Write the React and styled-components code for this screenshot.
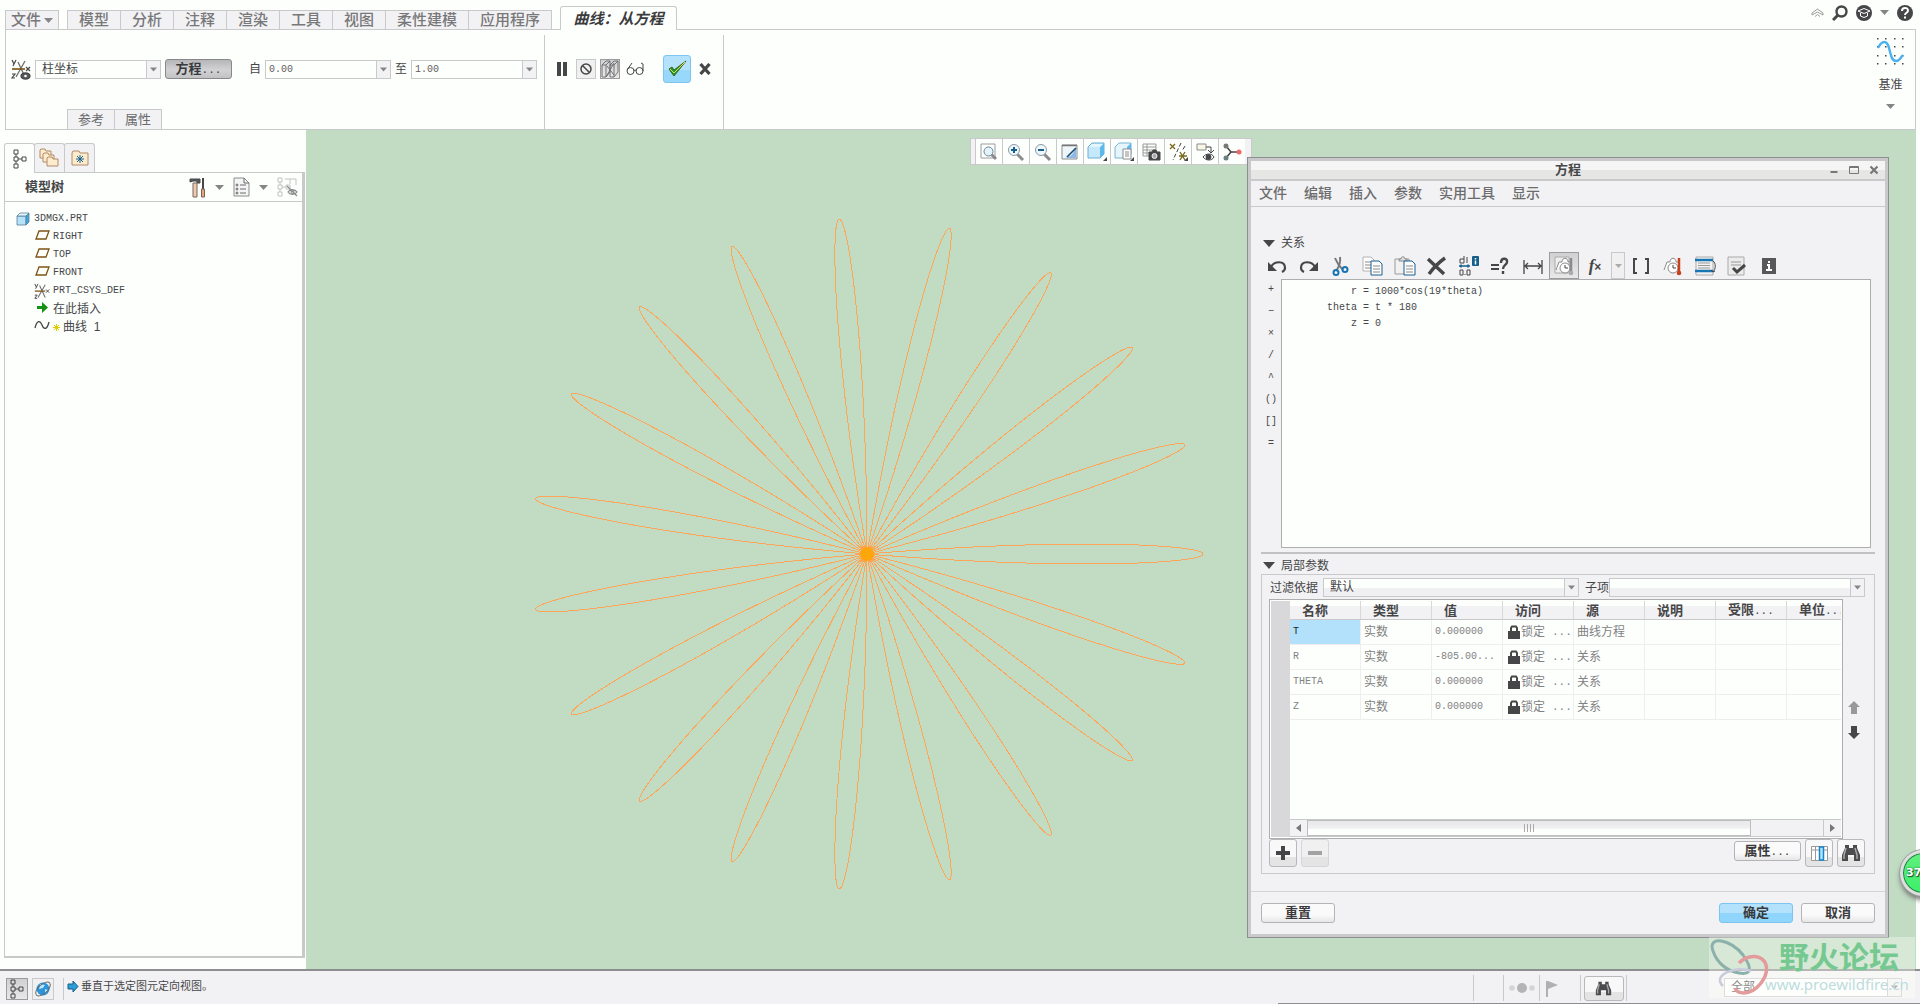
import React from 'react';
import styled, { createGlobalStyle, css } from 'styled-components';

const ui = '"Liberation Sans", "Noto Sans CJK SC", sans-serif';
const mono = '"Liberation Mono", "Noto Sans CJK SC", monospace';
const line = '#c9c9cb';
const dark = '#464648';
const face = '#f2f2f4';
const white = '#fdfffd';

const Global = createGlobalStyle`
  *, *::before, *::after { box-sizing: border-box; }
  html, body { margin: 0; background: ${white}; }
  body { font: 12px/18px ${ui}; color: ${dark}; overflow: hidden; }
  button, input, select, textarea { font: inherit; color: inherit; margin: 0; border-radius: 0; outline: none; }
  button { padding: 0; border: 0; background: none; white-space: nowrap; cursor: default; }
  svg { display: block; flex: none; }
`;

const Screen = styled.div`
  position: relative;
  display: flex;
  flex-direction: column;
  height: 100vh;
`;

const I = ({ w = 20, h = w, children, ...p }) => (
  <svg width={w} height={h} viewBox={`0 0 ${w} ${h}`} fill="none" stroke={dark} aria-hidden="true" {...p}>{children}</svg>
);
const Down = ({ c = '#858587' }) => <I w={9} h={5} stroke="none"><path d="M0 0h9L4.5 5z" fill={c} /></I>;

/* ---------- ribbon ---------- */
const TabRow = styled.nav`
  display: flex;
  align-items: flex-end;
  height: 29px;
  padding: 0 7px 0 5px;
`;
const Tab = styled.button`
  width: ${p => p.$w}px;
  height: 19px;
  border: solid ${line};
  border-width: 1px 1px 0 ${p => (p.$first ? 1 : 0)}px;
  background: ${face};
  color: #78787a;
  font-size: 15px;
  line-height: 18px;
  font-weight: 500;
  display: flex;
  align-items: center;
  justify-content: center;
  gap: 3px;
  ${p => p.$gap && css`margin-left: 8px;`}
  ${p => p.$active && css`
    height: 24px;
    margin-bottom: -1px;
    z-index: 1;
    border-radius: 3px 3px 0 0;
    background: ${white};
    color: #3c3c3e;
    font-style: italic;
    font-weight: 700;
  `}
`;
const Quick = styled.div`
  display: flex;
  align-items: center;
  gap: 8px;
  height: 25px;
  margin: 0 0 4px auto;
`;
const Panel = styled.section`
  display: flex;
  height: 101px;
  margin: 0 4px 0 5px;
  border: 1px solid ${line};
`;
const Section = styled.div`
  display: flex;
  flex-direction: column;
  justify-content: space-between;
  margin-top: 5px;
  padding-top: 20px;
  width: ${p => p.$w}px;
  border-right: 1px solid ${line};
`;
const Controls = styled.div`
  display: flex;
  align-items: center;
  height: 28px;
  padding-left: ${p => p.$pad}px;
  gap: 4px;
`;
const SubTabs = styled.div`
  display: flex;
  padding-left: 61px;
`;
const SubTab = styled.button`
  width: 48px;
  height: 20px;
  margin-right: -1px;
  border: 1px solid ${line};
  border-bottom: 0;
  background: ${face};
  color: #6a6a6c;
  font-size: 13px;
  line-height: 18px;
`;
const Combo = styled.div`
  position: relative;
  display: flex;
  width: ${p => (p.$w ? `${p.$w}px` : 'auto')};
  flex: ${p => (p.$w ? 'none' : '1')};
  height: 19px;
  border: 1px solid ${line};
  background: linear-gradient(${white} 50%, ${p => (p.$shade ? '#f0f0f2' : white)} 50%);
  select, input {
    appearance: none;
    width: 100%;
    min-width: 0;
    padding: 0 16px 0 ${p => p.$pad || 6}px;
    border: 0;
    background: transparent;
    line-height: 17px;
  }
  input { font: 10px/17px ${mono}; color: #66605e; }
`;
const Drop = styled.span`
  position: absolute;
  inset: 0 0 0 auto;
  width: 14px;
  display: grid;
  place-items: center;
  border-left: 1px solid ${line};
  background: ${face};
  pointer-events: none;
  svg { width: 7px; height: 5px; }
`;
const Select = ({ label, id, value, ...p }) => (
  <Combo {...p}>
    <select aria-label={label} id={id} defaultValue={value}><option>{value}</option></select>
    <Drop><Down /></Drop>
  </Combo>
);
const Text = styled.label`
  white-space: nowrap;
  padding-left: ${p => p.$l || 0}px;
`;
const pushFace = p => {
  if (p.$primary) return 'linear-gradient(#b4e1fc 50%, #90d5fb 50%)';
  if (p.$pressed) return 'linear-gradient(#b6b6b8, #d2d2d4 55%, #c2c2c4)';
  return 'linear-gradient(#fafafb 60%, #e6e6e7)';
};
const Push = styled.button`
  width: ${p => p.$w}px;
  height: 20px;
  border: 1px solid ${p => (p.$primary ? '#7cc4f2' : '#b4b4b6')};
  border-radius: 3px;
  background: ${pushFace};
  ${p => p.$pressed && css`border-color: #88888a;`}
  font-size: 13px;
  line-height: 18px;
  font-weight: 700;
  color: #3a3a3c;
`;
const Dots = styled.span`
  font: 11px/16px ${mono};
`;
const Flat = styled.button`
  display: grid;
  place-items: center;
  width: ${p => p.$w || 20}px;
  height: ${p => p.$h || p.$w || 20}px;
  ${p => p.$box && css`border: 1px solid ${line}; background: #f0f0f1;`}
  ${p => p.$down && css`border: 1px solid #9c9c9e; background: linear-gradient(#d0d0d2, #e8e8e9);`}
  ${p => p.$ok && css`margin-left: 11px; border: 1px solid #7cc4f2; border-radius: 3px; background: linear-gradient(#b4e1fc 55%, #98d8fb 55%);`}
  ${p => p.$raised && css`border: 1px solid #b9b9bb; border-radius: 3px; background: linear-gradient(#f8f8f9 65%, #e4e4e5 65%);`}
  ${p => p.disabled && css`border-color: #d6d6d8; background: linear-gradient(#f0f0f1 65%, #e4e4e5 65%);`}
`;
const Datum = styled.button`
  display: flex;
  flex-direction: column;
  align-items: center;
  justify-content: space-between;
  margin: 8px 11px 0 auto;
  height: 71px;
  line-height: 16px;
`;

const Csys = ({ eye, w = 20, h = 21 }) => (
  <svg width={w} height={h} viewBox="0 0 20 21" fill="none" stroke={dark} strokeWidth="1.3" aria-hidden="true">
    <path d="M5 18 14 2M7 3l7 15" stroke="#6d6d6f" />
    <path d="M1 10h13" stroke="#7d5312" strokeWidth="1.6" />
    <path d="m1 1 2 4m2-4L2 7M1 15h3l-3 4h3M15 8l4 4m0-4-4 4" strokeWidth="1.2" />
    {eye && <g><ellipse cx="14.5" cy="17" rx="4.5" ry="3" fill="#58585a" /><circle cx="14.5" cy="17" r="1.3" fill="#fff" stroke="none" /></g>}
  </svg>
);

const tabs = [['模型', 54, 1], ['分析', 53], ['注释', 53], ['渲染', 53], ['工具', 53], ['视图', 53], ['柔性建模', 83], ['应用程序', 83]];

const Ribbon = () => (
  <header>
    <TabRow>
      <Tab $w={54} $first>文件<Down /></Tab>
      {tabs.map(([t, w, f]) => <Tab key={t} $w={w} $first={f} $gap={f}>{t}</Tab>)}
      <Tab $w={117} $first $gap $active>曲线：从方程</Tab>
      <Quick>
        <I w={13} h={9} stroke="#9a9a9c"><path d="m1 5 5.5-4L12 5v2L6.500 4 1 7zM4 8.500l2.500-2 2.500 2" /></I>
        <I w={16} strokeWidth="2.4"><circle cx="9.5" cy="6.5" r="5" /><path d="m6 10-5 5" strokeWidth="3" /></I>
        <I w={16}><circle cx="8" cy="8" r="8" fill={dark} stroke="none" /><path d="m2 6 6-2.500L14 6 8 8.500zM4.500 8v3L8 12.500l3.500-1.500V8" stroke="#fff" /></I>
        <Down />
        <I w={16}><circle cx="8" cy="8" r="8" fill={dark} stroke="none" /><path d="M5 6c0-4 6-4 6-.5C11 8 8 7.500 8 10M8 11.500v2" stroke="#fff" strokeWidth="2" /></I>
      </Quick>
    </TabRow>
    <Panel>
      <Section $w={539}>
        <Controls $pad={5}>
          <Csys eye />
          <Select label="坐标类型" value="柱坐标" $w={126} />
          <Push $w={67} $pressed>方程<Dots>...</Dots></Push>
          <Text $l={13} htmlFor="from">自</Text>
          <Combo $w={126} $pad={3}><input id="from" defaultValue="0.00" /><Drop><Down /></Drop></Combo>
          <Text htmlFor="to">至</Text>
          <Combo $w={126} $pad={3}><input id="to" defaultValue="1.00" /><Drop><Down /></Drop></Combo>
        </Controls>
        <SubTabs><SubTab>参考</SubTab><SubTab>属性</SubTab></SubTabs>
      </Section>
      <Section $w={179}>
        <Controls $pad={7}>
          <Flat aria-label="暂停"><I w={12} h={14} stroke="none" fill={dark}><path d="M1 0h4v14H1zM7 0h4v14H7z" /></I></Flat>
          <Flat $box aria-label="无预览"><I w={14} strokeWidth="1.5"><circle cx="7" cy="7" r="5" /><path d="m3.500 3.500 7 7" /></I></Flat>
          <Flat $down aria-label="分离"><I w={18}><path d="M1 5 5 1h4v11l-4 5H1zM9 5l4-4h4v11l-4 5H9zM1 5h4v12M5 5l4-4M9 5h4v12m0-12 4-4M5 17 13 3M6 6l7 9" stroke="#727274" /></I></Flat>
          <Flat $w={24} aria-label="预览"><I w={20} h={14}><circle cx="4.5" cy="9" r="3.5" /><circle cx="13.5" cy="9" r="3.5" /><path d="M8 9c0-1.500 2-1.500 2 0M1 8 6 1M17 9V2l-2-1" /></I></Flat>
          <Flat $ok $w={28} aria-label="确定"><I w={22}><path d="m3 11 5 7L20 3l-12 9-2-3z" fill="#1a9c3c" stroke="#38661c" /><path d="m4 11 4 4L19 4" stroke="#f2d63a" /></I></Flat>
          <Flat aria-label="取消"><I w={12} strokeWidth="3.2"><path d="m1.500 1 9 10m0-10-9 10" /></I></Flat>
        </Controls>
      </Section>
      <Datum>
        <I w={27} stroke="#4ab0ee" strokeWidth="2.4">
          {[0, 8, 17, 25].map(x => [0, 8, 17, 25].map(y => <rect key={`${x}-${y}`} x={x} y={y} width="1.5" height="1.5" fill={dark} stroke="none" />))}
          <path d="M1 10c4-8 9-8 11 0s3 13 7 13 4-3 7-6" />
        </I>
        基准
        <Down />
      </Datum>
    </Panel>
  </header>
);

/* ---------- model tree ---------- */
const Work = styled.main`
  display: flex;
  flex: 1;
  min-height: 0;
  padding-right: 4px;
`;
const Side = styled.aside`
  display: flex;
  flex-direction: column;
  width: 306px;
  padding: 13px 1px 11px 4px;
`;
const SideTabs = styled.div`
  display: flex;
`;
const SideTab = styled.button`
  display: grid;
  place-items: center;
  width: 31px;
  height: ${p => (p.$active ? 30 : 29)}px;
  margin: 0 -1px ${p => (p.$active ? -1 : 0)}px 0;
  z-index: ${p => (p.$active ? 1 : 0)};
  border: 1px solid ${line};
  border-bottom: 0;
  border-radius: 3px 3px 0 0;
  background: ${p => (p.$active ? white : face)};
`;
const TreeBox = styled.div`
  flex: 1;
  border: 1px solid ${line};
  border-right: 3px solid ${line};
  border-bottom-width: 2px;
`;
const TreeHead = styled.div`
  display: flex;
  align-items: center;
  height: 29px;
  padding: 0 4px 0 20px;
  border-bottom: 1px solid ${line};
  gap: 9px;
  strong { font-size: 13px; margin-right: auto; }
`;
const Tree = styled.ul`
  list-style: none;
  margin: 0;
  padding: 8px 0 0 11px;
`;
const Node = styled.li`
  display: flex;
  align-items: center;
  gap: ${p => (p.$root ? 4 : 3)}px;
  height: 18px;
  padding-left: ${p => (p.$root ? 0 : 18)}px;
  font: ${p => (p.$cjk ? `12px/18px ${ui}` : `10px/20px ${mono}`)};
  white-space: pre;
`;
const TreeI = () => <I w={14} h={20}><path d="M1 1h4v4H1zM1 8h4v4H1zM1 15h4v4H1zM9 8h4v4H9zM3 5v3m0 4v3m2-5h4" /></I>;
const Plane = () => <I w={16} h={18}><path d="M5 3h10l-3 8H2z" stroke="#7d5312" strokeWidth="1.3" /></I>;
const Cube = () => (
  <svg width="14" height="14" viewBox="0 0 14 14" stroke="#5a7f95" strokeWidth=".8" aria-hidden="true"><path d="M1 4h9v9H1z" fill="#b5e2fb" /><path d="m1 4 3-3h9l-3 3z" fill="#e4f5fd" /><path d="m10 4 3-3v9l-3 3z" fill="#3ba7e2" /></svg>
);
const Folder = ({ x = 0, y = 0 }) => <path transform={`translate(${x} ${y})`} d="M1 10V2l1-1h4l1 2h5v7z" fill="#fdebcd" stroke="#b08a66" />;

const Sidebar = () => (
  <Side>
    <SideTabs>
      <SideTab $active aria-label="模型树"><TreeI /></SideTab>
      <SideTab aria-label="层树"><I w={21}><Folder /><Folder x={3} y={4} /><Folder x={7} y={8} /></I></SideTab>
      <SideTab aria-label="收藏夹"><I w={18} h={16}><path d="M1 15V3l1-2h6l1 2h8v12z" fill="#fdebcd" stroke="#b08a66" /><path d="M9 5v8M5 9h8M6 6l6 6m0-6-6 6" stroke="#155f8c" /></I></SideTab>
    </SideTabs>
    <TreeBox>
      <TreeHead>
        <strong>模型树</strong>
        <I w={17} h={21}><path d="M1 2h10v4H8V4H4L1 5z" fill="#58585a" /><path d="M4 6h4v14H4z" fill="#f0c9b2" stroke="#77665c" /><path d="M14 1v11" strokeWidth="2" /><path d="M12.500 12h3v8h-3z" fill="#e8a37c" stroke="#77665c" /></I>
        <Down />
        <I w={17} h={20}><path d="M1 1h10l5 5v13H1z" stroke="#8b8b8d" fill="#f5f5f6" /><path d="M11 1v5h5M7 8h6M7 12h6M7 16h6" stroke="#6b6b6d" /><g strokeWidth=".8"><circle cx="4" cy="8" r="1" /><circle cx="4" cy="12" r="1" /><circle cx="4" cy="16" r="1" /></g></I>
        <Down />
        <I w={21} h={20} stroke="#c2c2c4"><path d="M1 1h4v4H1zM1 8h4v4H1zM1 15h4v4H1zM9 8h4v4H9zM3 5v3m0 4v3m2-5h4M8 2h11v6M13 2v5" /><path d="M11 15c2-3 7-3 9 0-2 3-7 3-9 0zM10 9l10 10" stroke="#8b8b8d" strokeWidth="1.3" /><circle cx="15.5" cy="15" r="1.5" stroke="#8b8b8d" /></I>
      </TreeHead>
      <Tree>
        <Node $root><Cube />3DMGX.PRT</Node>
        <Node><Plane />RIGHT</Node>
        <Node><Plane />TOP</Node>
        <Node><Plane />FRONT</Node>
        <Node><Csys w={16} h={17} />PRT_CSYS_DEF</Node>
        <Node $cjk><I w={16} h={18} stroke="none"><path d="M3 6h5V2l6 5.500L8 13V9H3z" fill="#129314" /></I>在此插入</Node>
        <Node $cjk>
          <I w={16} h={18} strokeWidth="1.3"><path d="M1 10c2-8 5-8 7-3s5 5 7-3" /></I>
          <I w={7} stroke="#e0cd00"><path d="M3.500 0v7M0 3.500h7M1 1l5 5m0-5L1 6" /></I>曲线  1
        </Node>
      </Tree>
    </TreeBox>
  </Side>
);

/* ---------- graphics area ---------- */
const View = styled.section`
  position: relative;
  flex: 1;
  min-width: 0;
  background: #c1dcc3;
  overflow: hidden;
`;
const Plot = styled.svg`
  position: absolute;
  inset: 0;
  width: 100%;
  height: 100%;
`;
const ViewBar = styled.div`
  position: absolute;
  top: 8px;
  right: 664px;
  display: flex;
  height: 27px;
  padding: 0 6px 0 4px;
  border: 1px solid ${line};
  background: ${face};
`;
const ViewBtn = styled.button`
  display: grid;
  place-items: center;
  width: 27px;
  border-left: 1px solid ${line};
  background: ${white};
`;

const rosePath = (() => {
  const n = 3800;
  let d = '';
  for (let i = 0; i <= n; i++) {
    const a = (i / n) * Math.PI;
    const r = 336 * Math.cos(19 * a);
    d += `${i ? 'L' : 'M'}${(561 + r * Math.cos(a)).toFixed(2)} ${(424 - r * Math.sin(a)).toFixed(2)}`;
  }
  return d;
})();

const Corner = () => <path d="M20 15v4h-4z" fill={dark} stroke="none" />;
const Lens = ({ d }) => <><path d="m11 12 6 6" stroke="#8b8b8d" strokeWidth="3" /><circle cx="8" cy="8" r="5.5" fill="#edf7fc" stroke="#8b9ba5" /><path d={d} stroke="#155f8c" strokeWidth="2" /></>;
const viewIcons = [
  ['重新调整', <><path d="M2 2h14v14H2z" stroke="#9b9b9d" /><path d="m12 12 5 5" stroke="#8b8b8d" strokeWidth="3" /><circle cx="9.5" cy="9.5" r="4.5" fill="#e3f3fb" stroke="#6a8797" /></>],
  ['放大', <Lens d="M5 8h6M8 5v6" />],
  ['缩小', <Lens d="M5 8h6" />],
  ['重画', <><path d="M2 3h15v14H2z" fill="#eef6fb" stroke="#8b8b8d" /><path d="M16 5v11H5c6-1 9-5 11-11z" fill="#8fb8e6" stroke="none" /><path d="M2 3.500h15" stroke="#777" strokeWidth="1.5" /><path d="m7 15 9-9" stroke="#174a70" strokeWidth="1.6" /></>],
  ['显示样式', <><path d="m1 5 4-4h12v11l-4 4H1z" fill="#c5e8fb" stroke="#6baed3" /><path d="m13 5 4-4v11l-4 4z" fill="#5db8ee" stroke="none" /><path d="m2 5 3-3h11l-3 3z" fill="#e4f5fd" stroke="none" /><Corner /></>],
  ['已保存方向', <><path d="m1 5 4-4h12v11l-4 4H1z" fill="#e6f4fb" stroke="#7bb6d5" /><path d="m13 5 4-4v11l-4 4z" fill="#5db8ee" stroke="none" /><path d="M9 7h8v10H9z" fill="#fff" stroke="#8b8b8d" /><path d="M11 10h4m-4 2h4m-4 2h4" stroke="#8b8b8d" /><Corner /></>],
  ['视图管理器', <><path d="M2 2h13v12H2zM2 5h13M2 8h13M2 11h13M6 2v12" stroke="#999" /><path d="M8 10h3l1-2h3l1 2h3v8H8z" fill={dark} /><circle cx="13.5" cy="14" r="2.5" fill="#aaa" stroke="#eee" /></>],
  ['基准显示', <><g stroke="#7a6a1c" strokeWidth="1.4"><path d="m2 2 5 5m0-5L2 7M11 14h8m-7-4 5 8m0-8-5 8" /></g><path d="M13 1 5 18M17 4l-3 5" strokeDasharray="4 2" /><Corner /></>],
  ['注释显示', <><path d="M2 2h9v6H2z" fill="#f9f7e4" stroke="#8b8b8d" /><path d="M11 5h5v5m-3-2 3 3 3-3" /><path d="M8 15c3-4 9-4 11 0-2 4-8 4-11 0z" fill="#fff" /><circle cx="13.5" cy="15" r="2.5" fill={dark} /></>],
  ['旋转中心', <><path d="m4 4 5 6h7M9 10l-5 6" strokeWidth="1.6" /><circle cx="4" cy="4" r="2.5" fill="#777" stroke="none" /><circle cx="17" cy="10" r="2.5" fill="#ee6a66" stroke="none" /><circle cx="4" cy="16" r="2.5" fill="#68807e" stroke="none" /></>],
];

/* ---------- equation dialog ---------- */
const Dialog = styled.section`
  position: absolute;
  top: 27px;
  right: 27px;
  width: 642px;
  padding: 3px;
  border: 1px solid #8e8e92;
  background: ${line};
`;
const Title = styled.div`
  position: relative;
  display: flex;
  justify-content: center;
  align-items: center;
  height: 20px;
  border-bottom: 2px solid ${line};
  background: linear-gradient(#f5f5f6 50%, #e6e6e4 50%);
  h2 { margin: 0; font: 700 13px/18px ${ui}; }
`;
const WinBtns = styled.div`
  position: absolute;
  right: 1px;
  display: flex;
  button { width: 20px; display: grid; place-items: center; }
`;
const Menu = styled.nav`
  display: flex;
  align-items: center;
  gap: 17px;
  height: 26px;
  padding: 0 8px 2px;
  border-bottom: 1px solid ${line};
  background: ${face};
  button { font-size: 14px; line-height: 20px; font-weight: 500; color: #6c6c6e; }
`;
const Body = styled.div`
  padding: 27px 10px 17px;
  background: ${face};
`;
const Fold = styled.button`
  display: flex;
  align-items: center;
  gap: 6px;
  height: ${p => p.$h}px;
  padding-left: 2px;
`;
const Tools = styled.div`
  display: flex;
  height: 27px;
`;
const Editor = styled.div`
  display: flex;
  height: 269px;
  padding-right: 4px;
`;
const Ops = styled.div`
  display: flex;
  flex-direction: column;
  width: 20px;
  button { height: 22px; font: 10px/22px ${mono}; }
`;
const Code = styled.textarea`
  flex: 1;
  resize: none;
  padding: 4px 3px;
  border: 1px solid #aeaeb0;
  background: ${white};
  font: 10px/16px ${mono};
  overflow: hidden;
`;
const Split = styled.hr`
  height: 2px;
  margin: 4px 0 3px;
  border: 0;
  background: #c2c2c4;
`;
const Group = styled.div`
  padding: 3px 9px 6px 7px;
  border: 1px solid ${line};
`;
const Filter = styled.div`
  display: flex;
  align-items: center;
  margin-bottom: 2px;
  label { margin: 0 5px 0 1px; }
  label + div + label { margin: 0 0 0 6px; }
`;
const FrameRow = styled.div`
  display: flex;
`;
const Frame = styled.div`
  flex: 1;
  min-width: 0;
  display: flex;
  padding: 1px;
  border: 1px solid #aeaeb0;
  background: ${white};
  &::before { content: ''; width: 19px; background: #d8d8da; }
`;
const Grid = styled.div`
  flex: 1;
  min-width: 0;
  display: flex;
  flex-direction: column;
`;
const TableArea = styled.div`
  height: 218px;
  overflow: hidden;
`;
const Table = styled.table`
  width: 100%;
  table-layout: fixed;
  border-collapse: separate;
  border-spacing: 0;
  th, td { overflow: hidden; white-space: nowrap; text-align: left; border-right: 1px solid #eeeef0; }
  th {
    width: 71px; height: 18px; padding: 0 0 0 12px;
    border-color: #d8d8da; border-bottom: 1px solid ${line};
    background: linear-gradient(${white} 30%, ${face} 30%);
    font-size: 13px; line-height: 17px;
  }
  th:last-child { width: auto; }
  td { height: 25px; padding: 0 0 0 3px; border-bottom: 1px solid #eeeef0; color: #828284; line-height: 24px; }
  th:last-child, td:last-child { border-right: 0; }
`;
const Cell = styled.td`
  ${p => p.$mono && css`font: 10px/24px ${mono};`}
  ${p => p.$sel && css`&& { background: #b3e1fb; color: #222; }`}
`;
const Lock = styled.span`
  display: flex;
  align-items: center;
  padding-left: 2px;
  gap: 1px;
  ${Dots} { padding-left: 6px; }
`;
const Scroll = styled.div`
  display: flex;
  height: 18px;
  border-top: 1px solid ${line};
  border-bottom: 1px solid ${line};
  background: ${face};
  button { width: 17px; display: grid; place-items: center; }
`;
const Track = styled.div`
  flex: 1;
  border-right: 1px solid ${line};
`;
const Thumb = styled.div`
  display: grid;
  place-items: center;
  width: 86%;
  height: 100%;
  border: 1px solid #bdbdbf;
  background: linear-gradient(#eaeaec 20%, #f4f4f5 60%, ${white} 60%);
`;
const Move = styled.div`
  display: flex;
  flex-direction: column;
  justify-content: flex-end;
  align-items: center;
  gap: 12px;
  width: 22px;
  padding-bottom: 100px;
`;
const Bar = styled.div`
  display: flex;
  gap: 4px;
  ${Push} { margin-left: auto; margin-top: 2px; }
`;
const Foot = styled.div`
  display: flex;
  gap: 8px;
  padding: 11px 10px;
  border-top: 1px solid #d2d2d4;
  background: ${face};
  ${Push}:first-child { margin-right: auto; }
`;
const Glyph = styled.span`
  font: italic 700 17px/20px "Liberation Serif", serif;
  small { font: 700 12px/12px ${ui}; }
`;

const Clock = ({ hot }) => <>
  <path d="M2 14 5 6h3c0-5 6-5 6 0h2" stroke="#8b8b8d" fill="#fff" /><circle cx="11" cy="12" r="5" fill="#fff" stroke="#8b8b8d" />
  <path d="M11 9v3h3" /><path d="M17 2v14" stroke={hot ? '#c9411c' : '#8b8b8d'} strokeWidth="2.5" /><circle cx="17" cy="17" r="2.3" fill={hot ? '#c9411c' : '#aaa'} stroke="none" />
</>;
const Doc = ({ x, y, c }) => <g transform={`translate(${x} ${y})`}><path d="M0 0h8l3 3v11H0z" fill="#fdfdfd" stroke={c} /><path d="M2 5h7M2 8h7M2 11h7" stroke="#8b8b8d" /></g>;
const toolsA = [
  ['撤消', <><path d="M5 11c3-6 14-7 14 1 0 2-1 3-3 4" strokeWidth="2.2" /><path d="M2 6v9h9z" fill={dark} stroke="none" /></>],
  ['重做', <><path d="M17 11C14 5 3 4 3 12c0 2 1 3 3 4" strokeWidth="2.2" /><path d="M20 6v9h-9z" fill={dark} stroke="none" /></>],
  ['剪切', <><path d="M5 2c2 5 5 9 8 12M10 1c1 6-1 10-4 14" stroke="#77777a" strokeWidth="2" /><circle cx="6" cy="16.5" r="2.5" stroke="#1675b2" strokeWidth="2" /><circle cx="15" cy="13.5" r="2.5" stroke="#1675b2" strokeWidth="2" /></>],
  ['复制', <><Doc x={1} y={1} c="#b4b4b6" /><Doc x={9} y={5} c="#155f8c" /></>],
  ['粘贴', <><path d="M1 3h14v15H1z" fill="#f1f1f1" stroke="#9b9b9d" /><path d="M5 5V3h2c0-3 4-3 4 0h2v2z" fill="#ddd" stroke="#8b8b8d" /><Doc x={10} y={5} c="#155f8c" /></>],
  ['删除', <path d="m2 3 16 15M19 2C12 7 8 11 3 18" strokeWidth="3.4" />],
  ['尺寸', <><rect x="14" y="0" width="7" height="10" rx="1" fill="#155f8c" stroke="none" /><path d="M17.500 2v1.500m0 1v4" stroke="#fff" strokeWidth="1.5" /><path d="M6 0v7H2V3h4M9 1v6M2 14h3v5H2zm7 0h3v5H9zM7 18v1" /><path d="M1 10h11M3 8.500v3m7-3v3" stroke="#155f8c" strokeWidth="1.6" /></>],
  ['求解', <><path d="M1 9h8M1 13h8" strokeWidth="2" /><path d="M11 7c0-6 7-5 6-1 0 3-4 3-4 7M13 15v3" strokeWidth="2.4" /></>],
  ['范围', <path d="M2 4v14M20 4v14M3 10h16M6 7l-3 3 3 3M16 7l3 3-3 3" strokeWidth="1.3" />],
];
const toolsB = [
  ['括号', <path d="M7 3H4v14h3M15 3h3v14h-3" strokeWidth="2" />],
  ['单位', <Clock hot />],
  ['排序', <><path d="M2 1h17v18H2z" fill="#f2f2f2" stroke="#aaa" /><path d="M1 4h18M1 15h18" stroke="#1675b2" strokeWidth="2.6" /><path d="M4 7h12M4 9.500h12M4 12h12" stroke="#999" /><path d="M19 5c3 2 3 8 0 11m-2-2 2 2 2-1" /></>],
  ['校验', <><path d="M2 1h16v18H2z" fill="#ececec" stroke="#aaa" /><path d="M5 6h10M5 9h10" stroke="#999" /><path d="m7 12 4 4 8-7" strokeWidth="3" /></>],
  ['信息', <><path d="M4 2h14v16H4z" fill="#58585a" stroke="none" /><path d="M11 5v2m-2 2h2v5m-3 0h6" stroke="#fff" strokeWidth="2" /></>],
];
const Lk = () => <I w={12} h={14}><path d="M3 7V3l1-1.500h4L9 3v4" strokeWidth="2" /><path d="M0 6h12v8H0z" fill={dark} stroke="none" /></I>;
const Binoc = ({ s = 20 }) => <svg width={s} height={s} viewBox="0 0 20 20" aria-hidden="true"><path d="M4 2h4v3h4V2h4v3l3 7v6h-6v-6H7v6H1v-6l3-7z" fill="#4c4c4e" /><path d="m5 5-2 7v4m11-11 2 7v4" stroke="#a8a8aa" strokeWidth="1.5" fill="none" /></svg>;
const Tri = () => <I w={12} h={7} stroke="none"><path d="M0 0h12L6 7z" fill={dark} /></I>;
const Arrow = ({ up }) => <I w={12} h={13} stroke="none"><path d={up ? 'M6 0l6 6H9v7H3V6H0z' : 'M6 13l6-6H9V0H3v7H0z'} fill={up ? '#98989a' : dark} /></I>;

const cols = ['名称', '类型', '值', '访问', '源', '说明', '受限...', '单位...'];
const rows = [['T', '0.000000', '曲线方程'], ['R', '-805.00...', '关系'], ['THETA', '0.000000', '关系'], ['Z', '0.000000', '关系']];
const code = `           r = 1000*cos(19*theta)
       theta = t * 180
           z = 0`;

const Equation = () => (
  <Dialog role="dialog" aria-label="方程">
    <Title>
      <h2>方程</h2>
      <WinBtns>
        <button aria-label="最小化"><I w={10}><path d="M1.500 7h7" stroke="#777" strokeWidth="2" /></I></button>
        <button aria-label="最大化"><I w={10} h={8}><path d="M.5.5h9v7h-9zM0 1.500h10" stroke="#777" /></I></button>
        <button aria-label="关闭"><I w={10}><path d="m1.500 1.500 7 7m0-7-7 7" stroke="#777" strokeWidth="2.2" /></I></button>
      </WinBtns>
    </Title>
    <Menu>{['文件', '编辑', '插入', '参数', '实用工具', '显示'].map(m => <button key={m}>{m}</button>)}</Menu>
    <Body>
      <Fold $h={18}><Tri />关系</Fold>
      <Tools>
        {toolsA.map(([n, g]) => <Flat key={n} $w={32} $h={27} aria-label={n}><I w={22} h={20}>{g}</I></Flat>)}
        <Flat $down $w={30} $h={27} aria-label="单位敏感"><I w={21} h={20}><path d="M1 1h14v16H1z" fill="#eee" stroke="#aaa" /><Clock /></I></Flat>
        <Flat $w={32} $h={27} aria-label="函数"><Glyph>f<small>×</small></Glyph></Flat>
        <Flat $box $w={14} $h={27} aria-label="更多函数"><I w={7} h={4} stroke="none"><path d="M0 0h7L3.500 4z" fill="#aaa" /></I></Flat>
        {toolsB.map(([n, g]) => <Flat key={n} $w={32} $h={27} aria-label={n}><I w={22} h={20}>{g}</I></Flat>)}
      </Tools>
      <Editor>
        <Ops>{['+', '−', '×', '/', '^', '()', '[]', '='].map(o => <button key={o}>{o}</button>)}</Ops>
        <Code aria-label="关系" defaultValue={code} spellCheck={false} />
      </Editor>
      <Split />
      <Fold $h={17}><Tri />局部参数</Fold>
      <Group>
        <Filter>
          <label htmlFor="by">过滤依据</label><Select id="by" value="默认" $shade />
          <label htmlFor="sub">子项</label><Select id="sub" value="" $shade />
        </Filter>
        <FrameRow>
          <Frame>
            <Grid>
              <TableArea>
                <Table>
                  <thead><tr>{cols.map(c => <th key={c}>{c.replace('...', '')}{c.endsWith('...') && <Dots>...</Dots>}</th>)}</tr></thead>
                  <tbody>
                    {rows.map(([n, v, s], i) => (
                      <tr key={n}>
                        <Cell $mono $sel={i === 0}>{n}</Cell>
                        <Cell>实数</Cell>
                        <Cell $mono>{v}</Cell>
                        <Cell><Lock><Lk />锁定<Dots>...</Dots></Lock></Cell>
                        <Cell>{s}</Cell><Cell /><Cell /><Cell />
                      </tr>
                    ))}
                  </tbody>
                </Table>
              </TableArea>
              <Scroll>
                <button aria-label="向左"><I w={5} h={8} stroke="none"><path d="M5 0v8L0 4z" fill="#777" /></I></button>
                <Track><Thumb><I w={12} h={8} stroke="#aaa"><path d="M1.500 0v8m3-8v8m3-8v8m3-8v8" /></I></Thumb></Track>
                <button aria-label="向右"><I w={5} h={8} stroke="none"><path d="M0 0v8l5-4z" fill="#777" /></I></button>
              </Scroll>
            </Grid>
          </Frame>
          <Move>
            <button aria-label="上移"><Arrow up /></button>
            <button aria-label="下移"><Arrow /></button>
          </Move>
        </FrameRow>
        <Bar>
          <Flat $raised $w={28} aria-label="添加"><I w={14} strokeWidth="4"><path d="M7 0v14M0 7h14" /></I></Flat>
          <Flat $raised $w={28} disabled aria-label="移除"><I w={14} stroke="#a2a2a4" strokeWidth="4"><path d="M0 7h14" /></I></Flat>
          <Push $w={67}>属性<Dots>...</Dots></Push>
          <Flat $raised $w={28} aria-label="列"><I w={17} h={15}><path d="M.5.5h16v14H.5zM0 4h17M4.500 0v15" stroke="#999" fill="#fff" /><path d="M8.500 1h4v13h-4z" fill="#b5e2fb" stroke="#1684c7" strokeWidth="1.5" /></I></Flat>
          <Flat $raised $w={28} aria-label="查找"><Binoc /></Flat>
        </Bar>
      </Group>
    </Body>
    <Foot><Push $w={74}>重置</Push><Push $w={74} $primary>确定</Push><Push $w={74}>取消</Push></Foot>
  </Dialog>
);

/* ---------- status bar ---------- */
const Status = styled.footer`
  display: flex;
  height: 35px;
  border-top: 2px solid #8e8e92;
  background: ${face};
`;
const Left = styled.div`
  display: flex;
  gap: 4px;
  padding: 7px 0 0 6px;
`;
const Message = styled.p`
  display: flex;
  gap: 2px;
  margin: 0 0 0 5px;
  padding: 0 0 0 3px;
  height: 22px;
  border-left: 1px solid ${line};
  font-size: 11px;
  line-height: 16px;
  svg { margin-top: 2px; }
`;
const Right = styled.div`
  display: flex;
  width: 642px;
  margin-left: auto;
  padding: 4px 18px 0 195px;
  border-bottom: 1px solid #8e8e92;
`;
const Slot = styled.div`
  display: grid;
  place-items: center;
  width: ${p => p.$w}px;
  height: 26px;
  border-left: 1px solid ${line};
`;
const Pick = styled.div`
  display: flex;
  margin: 3px 0 0 auto;
`;

/* ---------- overlays ---------- */
const Mark = styled.div`
  position: absolute;
  right: 5px;
  bottom: 6px;
  width: 206px;
  height: 61px;
  display: flex;
  background: rgba(255, 255, 250, .36);
  pointer-events: none;
`;
const MarkText = styled.div`
  display: flex;
  flex-direction: column;
  flex: 1;
  margin-left: -4px;
  white-space: nowrap;
  b { font: 700 30px/36px "Noto Sans CJK SC", sans-serif; color: #76c891; padding-left: 14px; }
  span { font: 15px/22px "Noto Sans", sans-serif; color: #bcdcde; }
`;
const Ball = styled.div`
  position: absolute;
  right: -26px;
  bottom: 108px;
  width: 46px;
  height: 46px;
  padding-left: 3px;
  border: 3px solid #dedede;
  border-radius: 50%;
  outline: 1px solid #a0a0a0;
  background: linear-gradient(#62ee7e, #3cf06a);
  box-shadow: inset 0 0 0 1px #27794a, 0 4px 5px #777;
  color: #fff;
  font: 700 11px/40px "DejaVu Sans", sans-serif;
  text-shadow: 0 0 2px #145428, 1px 1px 1px #145428;
`;
const Clip = styled.div`
  position: absolute;
  inset: 0;
  overflow: hidden;
  pointer-events: none;
`;

export default function App() {
  return (
    <Screen>
      <Global />
      <Ribbon />
      <Work>
        <Sidebar />
        <View>
          <Plot viewBox="0 0 1610 839" preserveAspectRatio="xMinYMin meet" fill="none">
            <path d={rosePath} stroke="#ffa557" strokeWidth="1" shapeRendering="crispEdges" />
            <circle cx="561" cy="424" r="7" fill="#ffa60a" />
          </Plot>
          <ViewBar>
            {viewIcons.map(([n, g]) => <ViewBtn key={n} aria-label={n}><I w={20}>{g}</I></ViewBtn>)}
          </ViewBar>
          <Equation />
        </View>
      </Work>
      <Status>
        <Left>
          <Flat $down $w={22} aria-label="模型树"><TreeI /></Flat>
          <Flat $box $w={22} aria-label="浏览器"><I w={18}><circle cx="9" cy="9" r="6.5" fill="#2b94dc" stroke="none" /><path d="M6 4l5 1-2 3-4 1zM11 9l3 1-3 4z" fill="#bfe5fa" stroke="none" /><ellipse cx="9" cy="9" rx="9" ry="4.5" transform="rotate(-42 9 9)" stroke="#666" /></I></Flat>
          <Message><I w={12} h={13}><path d="M1 4h5V1l5 5.500L6 12V9H1z" fill="#2d9ed6" stroke="#155f8c" /></I>垂直于选定图元定向视图。</Message>
        </Left>
        <Right>
          <Slot $w={30} />
          <Slot $w={36}><I w={26} h={12} stroke="none" fill="#b4b4b4"><circle cx="13" cy="6" r="5" /><circle cx="3" cy="6" r="2.8" fill="#d4d4d4" /><circle cx="23" cy="6" r="2.8" fill="#d4d4d4" /></I></Slot>
          <Slot $w={41}><I w={30} h={17} stroke="none"><path d="M1 1h2l10 4-10 4v8H1z" fill="#b0b0b0" /></I></Slot>
          <Slot $w={46}><Flat $raised $w={40} $h={25} aria-label="查找"><Binoc s={17} /></Flat></Slot>
          <Slot $w={1} />
          <Pick><Select label="过滤器" value="全部" $w={178} /></Pick>
        </Right>
      </Status>
      <Mark>
        <I w={60} h={60}>
          <path d="M4 14C-2-2 22 2 34 18c10 14 8 20-4 18C18 34 8 26 4 14z" stroke="#8cb0aa" strokeWidth="3" />
          <path d="M30 26c10-10 24-8 27 2 3 12-10 28-22 28-5 0-8-2-9-5" stroke="#e39b9b" strokeWidth="3.5" />
          <path d="M42 34c-14-6-40 4-28 15" stroke="#c9cbdc" strokeWidth="2.5" />
        </I>
        <MarkText><b>野火论坛</b><span>www.proewildfire.cn</span></MarkText>
      </Mark>
      <Clip><Ball>37</Ball></Clip>
    </Screen>
  );
}
